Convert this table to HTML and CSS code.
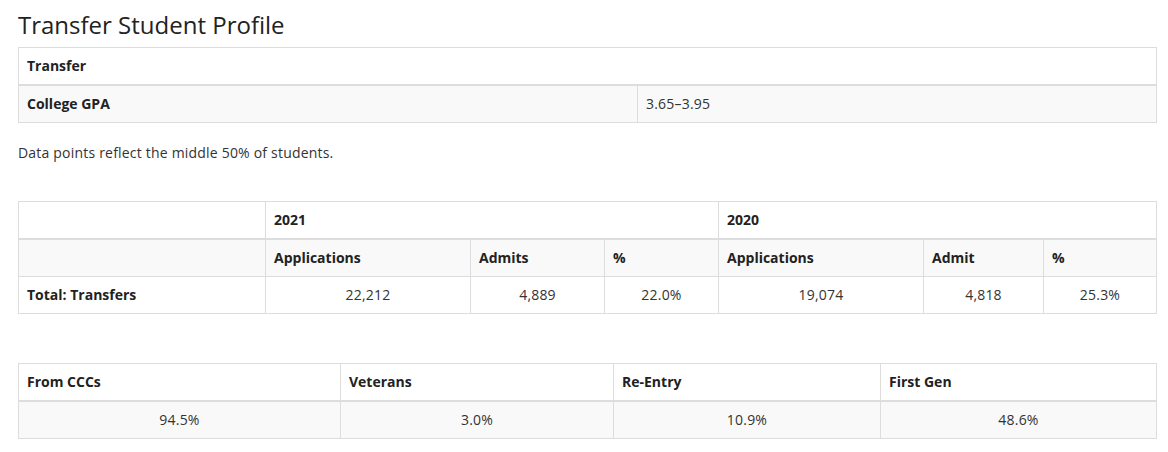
FILE: index.html
```html
<!DOCTYPE html>
<html>
<head>
<meta charset="utf-8">
<title>Transfer Student Profile</title>
<link rel="stylesheet" href="styles.css">
</head>
<body>
<div class="page">
  <h2 class="title">Transfer Student Profile</h2>

  <table class="tbl tbl-gpa">
    <colgroup><col class="g1"><col class="g2"></colgroup>
    <thead>
      <tr><th colspan="2">Transfer</th></tr>
    </thead>
    <tbody>
      <tr><th>College GPA</th><td>3.65–3.95</td></tr>
    </tbody>
  </table>

  <p class="note">Data points reflect the middle 50% of students.</p>

  <table class="tbl tbl-apps">
    <colgroup>
      <col class="a1"><col class="a2"><col class="a3"><col class="a4"><col class="a5"><col class="a6"><col class="a7">
    </colgroup>
    <thead>
      <tr><th></th><th colspan="3">2021</th><th colspan="3">2020</th></tr>
    </thead>
    <tbody>
      <tr><th></th><th>Applications</th><th>Admits</th><th>%</th><th>Applications</th><th>Admit</th><th>%</th></tr>
      <tr><th>Total: Transfers</th><td class="c">22,212</td><td class="c">4,889</td><td class="c">22.0%</td><td class="c">19,074</td><td class="c">4,818</td><td class="c">25.3%</td></tr>
    </tbody>
  </table>

  <table class="tbl tbl-groups">
    <colgroup><col class="s1"><col class="s2"><col class="s3"><col class="s4"></colgroup>
    <thead>
      <tr><th>From CCCs</th><th>Veterans</th><th>Re-Entry</th><th>First Gen</th></tr>
    </thead>
    <tbody>
      <tr><td class="c">94.5%</td><td class="c">3.0%</td><td class="c">10.9%</td><td class="c">48.6%</td></tr>
    </tbody>
  </table>
</div>
</body>
</html>
```

FILE: styles.css
```css
html, body {
  margin: 0;
  padding: 0;
  background: #fff;
}
body {
  font-family: "Open Sans", "Liberation Sans", sans-serif;
  font-size: 14px;
  line-height: 20px;
  color: #333;
  letter-spacing: 0.2px;
}
.page {
  padding: 0 11px 0 18px;
}
.title {
  margin: 0;
  padding-top: 9px;
  font-size: 24px;
  font-weight: 400;
  line-height: 32px;
  color: #222;
  height: 38px;
  letter-spacing: 0;
}
.tbl {
  width: 100%;
  border-collapse: collapse;
  border-spacing: 0;
  border: 1px solid #ddd;
  table-layout: fixed;
}
.tbl th, .tbl td {
  border: 1px solid #ddd;
  padding: 8px;
  text-align: left;
  vertical-align: top;
  height: 20px;
  line-height: 20px;
}
.tbl th {
  font-weight: 700;
  color: #222;
  letter-spacing: 0;
}
.tbl thead th {
  border-bottom: 2px solid #ddd;
}
.tbl tbody tr:nth-of-type(odd) {
  background: #f9f9f9;
}
.tbl td.c {
  text-align: center;
}
.note {
  margin: 20px 0 38px;
}
.tbl-apps {
  margin-bottom: 49px;
}
.g1 { width: 619px; }
.g2 { width: auto; }
.a1 { width: 247px; }
.a2 { width: 205px; }
.a3 { width: 134px; }
.a4 { width: 114px; }
.a5 { width: 205px; }
.a6 { width: 120px; }
.a7 { width: auto; }
.s1 { width: 322px; }
.s2 { width: 273px; }
.s3 { width: 267px; }
.s4 { width: auto; }
```
